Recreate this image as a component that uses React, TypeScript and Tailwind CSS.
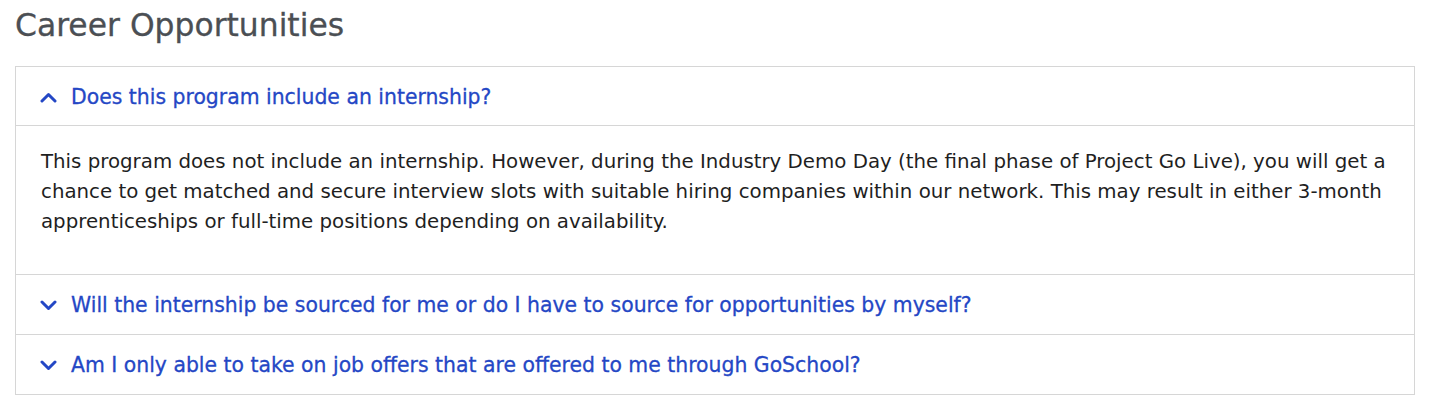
import React from "react";

const Chevron = ({ up }: { up?: boolean }) => (
  <svg width="17" height="11" viewBox="0 0 17 11" className="shrink-0">
    <polyline
      points={up ? "2,9 8.5,2.5 15,9" : "2,2 8.5,8.5 15,2"}
      fill="none"
      stroke="#2447c5"
      strokeWidth="3"
      strokeLinecap="round"
      strokeLinejoin="round"
    />
  </svg>
);

const Row = ({ q, up, h }: { q: string; up?: boolean; h: string }) => (
  <div
    className={`flex ${h} items-center gap-[14px] pl-[24px] pt-[2px] text-[20.4px] font-medium text-[#2447c5] [-webkit-text-stroke:0.3px_#2447c5]`}
  >
    <Chevron up={up} />
    <span>{q}</span>
  </div>
);

export default function App() {
  return (
    <div
      className="min-h-[418px] bg-white px-[15px] pt-[3px]"
      style={{ fontFamily: "'DejaVu Sans', Verdana, sans-serif" }}
    >
      <h2 className="text-[31.4px] font-medium leading-[45px] text-[#4b4f54] [-webkit-text-stroke:0.3px_#4b4f54]">
        Career Opportunities
      </h2>
      <div className="mt-[18px] w-[1400px] border border-[#d6d6d6]">
        <Row up h="h-[58px]" q="Does this program include an internship?" />
        <div className="border-t border-[#d6d6d6] pb-[37px] pl-[25px] pr-[10px] pt-[21px] text-[19.8px] leading-[30px] text-[#1f1f1f]">
          This program does not include an internship. However, during the Industry Demo Day (the final phase of Project
          Go Live), you will get a chance to get matched and secure interview slots with suitable hiring companies within
          our network. This may result in either 3-month apprenticeships or full-time positions depending on availability.
        </div>
        <div className="border-t border-[#d6d6d6]">
          <Row h="h-[59px]" q="Will the internship be sourced for me or do I have to source for opportunities by myself?" />
        </div>
        <div className="border-t border-[#d6d6d6]">
          <Row h="h-[59px]" q="Am I only able to take on job offers that are offered to me through GoSchool?" />
        </div>
      </div>
    </div>
  );
}
